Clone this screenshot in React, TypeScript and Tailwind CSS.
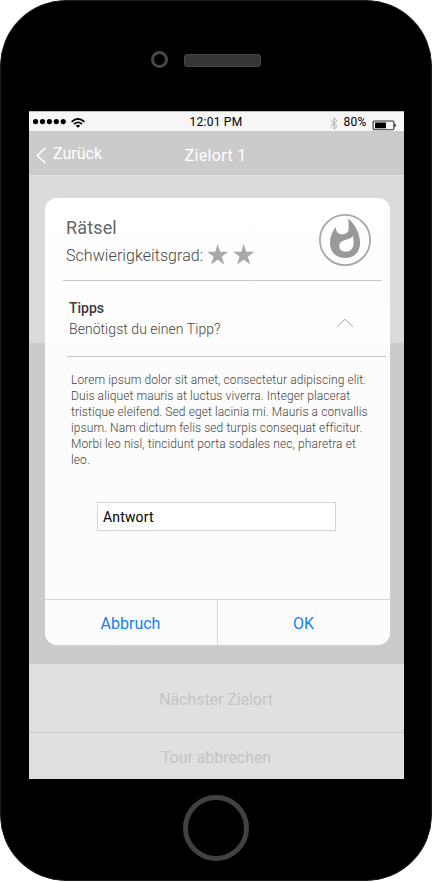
import React from "react";

const Star = () => (
  <svg className="block h-[22px] w-[22px]" viewBox="0 0 22 22" fill="#a9a9a9">
    <path d="M10.7 0 L13.2 7.8 H21.4 L14.8 12.6 L17.3 20.6 L10.7 15.8 L4.1 20.6 L6.6 12.6 L0 7.8 H8.2 Z" />
  </svg>
);

const Flame = () => (
  <svg className="block h-[52px] w-[52px]" viewBox="57 27 156 156">
    <circle cx="135" cy="105" r="75.3" fill="none" stroke="#a9a9a9" strokeWidth="5.4" />
    <path
      fill="#999"
      fillRule="evenodd"
      d="M144 40 C164 58 181 84 180 116 C179 143 161 159 135 159 C109 159 90 142 90 114 C90 95 97 79 107 65 C107 80 115 88 127 88 C139 88 146 81 146 70 C146 60 146 50 144 40 Z M159 93 C155 99 148 102 138 104 C125 107 118 113 118 123 C118 134 126 140 137 140 C151 140 160 130 161 116 C161 107 159 99 159 93 Z"
    />
  </svg>
);

const StatusBar = () => (
  <div className="flex h-5 border-t border-[#b8b8b8] bg-[#f6f6f6] text-xs leading-5 text-black">
    <div className="flex w-[161px] pl-[3px]">
      <svg className="block h-[19px] w-[60px]" viewBox="0 0 60 19">
        <circle cx="3.6" cy="9.6" r="2.6" />
        <circle cx="10.5" cy="9.6" r="2.6" />
        <circle cx="17.4" cy="9.6" r="2.6" />
        <circle cx="24.3" cy="9.6" r="2.6" />
        <circle cx="31.2" cy="9.6" r="2.6" />
        <g fill="none" stroke="#000" strokeWidth="1.8">
          <path d="M39.6 9.8 Q46 4 52.4 9.8" />
          <path d="M42 12.1 Q46 8.6 50 12.1" />
        </g>
        <path d="M43.8 13.7 Q46 12 48.2 13.7 L46 15.8 Z" />
      </svg>
    </div>
    <span className="w-[140.5px] tracking-[0.25px]">12:01 PM</span>
    <svg className="mt-[5px] block h-[13px] w-[8px]" viewBox="0 0 8 13" fill="none" stroke="#aaa" strokeWidth="1">
      <path d="M0.7 3.2 L7 9.3 L4 12.2 V0.8 L7 3.7 L0.7 9.8" />
    </svg>
    <span className="ml-[5.5px] w-[28px] tracking-[0.2px]">80%</span>
    <svg className="mt-[8px] block h-[11px] w-[25px]" viewBox="0 0 25 11">
      <rect x="1.1" y="1" width="20.8" height="8.8" rx="1.2" fill="none" stroke="#333" strokeWidth="1.1" />
      <rect x="3" y="2.5" width="11" height="5.8" fill="#000" />
      <path d="M22.4 3.7 h0.8 l0.8 1.7 l-0.8 1.7 h-0.8 z" fill="#222" />
    </svg>
  </div>
);

const NavBar = () => (
  <div className="flex h-[45px] border-b border-[#e2e2e2] bg-[#cbcbcb] text-base text-white">
    <svg className="ml-[7px] mt-[16px] block h-[17px] w-[11px]" viewBox="0 0 11 17" fill="none" stroke="#fff" strokeWidth="1.5">
      <path d="M9.5 0.8 L1.3 8.6 L9.5 16.2" />
    </svg>
    <span className="ml-[6.5px] w-[131.5px] leading-[46px]">Zurück</span>
    <span className="tracking-[0.35px] leading-[49px]">Zielort 1</span>
  </div>
);

const Dialog = () => (
  <div className="absolute left-[16px] top-[87px] flex h-[447px] w-[345px] flex-col overflow-hidden rounded-xl bg-linear-to-b from-white to-[#fcfcfc] to-40%">
    <div className="ml-[18px] flex h-[83px] w-[319px] justify-between border-b border-[#c8c8c8]">
      <div className="ml-[3.5px] pt-[16px]">
        <div className="h-[26px] text-lg leading-[28px] tracking-[0.15px] text-[#666]">Rätsel</div>
        <div className="flex h-[30px] items-center text-base font-light leading-[31px] text-[#444]">
          <span className="w-[140.5px] whitespace-nowrap pt-px tracking-[0.07px]">Schwierigkeitsgrad:</span>
          <Star />
          <span className="w-1" />
          <Star />
        </div>
      </div>
      <div className="mr-[11px] mt-[16px]">
        <Flame />
      </div>
    </div>
    <div className="ml-[22px] flex h-[76px] w-[319px] justify-between border-b border-[#c8c8c8]">
      <div className="ml-[2.5px] pt-[17px] text-sm leading-[21px]">
        <div className="font-medium text-[#3c3c3c]">Tipps</div>
        <div className="font-light tracking-[0.05px] text-[#444]">Benötigst du einen Tipp?</div>
      </div>
      <svg className="mr-[32px] mt-[37px] block h-[10px] w-[18px]" viewBox="0 0 18 10" fill="none" stroke="#aaa" strokeWidth="1">
        <path d="M1 9 L9 1.2 L17 9" />
      </svg>
    </div>
    <div className="ml-[26.5px] mt-[15px] whitespace-nowrap text-xs font-light leading-4 tracking-[0.09px] text-[#444]">
      Lorem ipsum dolor sit amet, consectetur adipiscing elit.<br />
      Duis aliquet mauris at luctus viverra. Integer placerat<br />
      tristique eleifend. Sed eget lacinia mi. Mauris a convallis<br />
      ipsum. Nam dictum felis sed turpis consequat efficitur.<br />
      Morbi leo nisl, tincidunt porta sodales nec, pharetra et<br />
      leo.
    </div>
    <div className="ml-[52px] mt-[34px] h-[29px] w-[239px] border border-[#d2d4d5] bg-white pl-[5.5px] text-sm leading-[28px] tracking-[0.15px] text-black">
      Antwort
    </div>
    <div className="mt-auto flex h-[46px] border-t border-[#d3d5d6] text-center text-base leading-[47px] text-[#0f80f8]">
      <div className="w-[173px] border-r border-[#d3d5d6]">Abbruch</div>
      <div className="flex-1">OK</div>
    </div>
  </div>
);

export default function App() {
  return (
    <div className="h-[882px] w-[432px] overflow-hidden bg-white font-['Roboto',sans-serif]">
      <div className="flex h-[881px] flex-col items-center rounded-[66px] border border-[#1c1c1c] bg-black">
        <div className="flex h-[110px] w-full pl-[150px] pt-[50px]">
          <div className="h-[17px] w-[17px] rounded-full border-3 border-[#484848]" />
          <div className="ml-[16px] mt-[3px] h-[13px] w-[77px] rounded-[3px] border border-[#444] bg-[#353535]" />
        </div>
        <div className="relative flex h-[668px] w-[375px] flex-col">
          <StatusBar />
          <NavBar />
          <div className="h-[167px] bg-[#dbdbdb]" />
          <div className="h-[321px] bg-[#cbcbcb]" />
          <div className="h-[69px] border-b border-[#c8c8c8] bg-[#e0e0e0] text-center text-base leading-[71px] tracking-[-0.06px] text-[#c4c4c4]">
            Nächster Zielort
          </div>
          <div className="h-[46px] bg-[#e0e0e0] text-center text-base leading-[49px] tracking-[-0.06px] text-[#c4c4c4]">Tour abbrechen</div>
          <Dialog />
        </div>
        <div className="mt-4 h-[66px] w-[66px] rounded-full border-[5px] border-[#424242]" />
      </div>
    </div>
  );
}
